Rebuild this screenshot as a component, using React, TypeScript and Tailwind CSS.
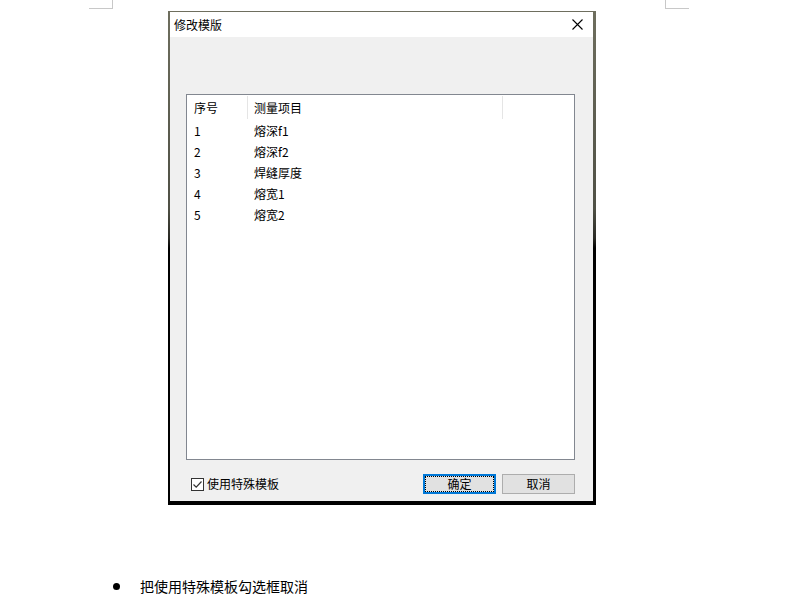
const rows = [
  { no: "1", name: "熔深f1" },
  { no: "2", name: "熔深f2" },
  { no: "3", name: "焊缝厚度" },
  { no: "4", name: "熔宽1" },
  { no: "5", name: "熔宽2" },
];

function CloseIcon() {
  return (
    <svg width="11" height="11" viewBox="0 0 11 11" className="block">
      <path d="M0.5 0.5 L10.5 10.5 M10.5 0.5 L0.5 10.5" stroke="#000" strokeWidth="1.1" fill="none" />
    </svg>
  );
}

function CheckBox() {
  return (
    <span className="flex h-[13px] w-[13px] items-center justify-center border border-[#333] bg-white">
      <svg width="11" height="11" viewBox="0 0 11 11" className="block">
        <path d="M1.5 5.5 L4.2 8.2 L9.5 2.5" stroke="#333" strokeWidth="1.2" fill="none" />
      </svg>
    </span>
  );
}

export default function App() {
  return (
    <div className="h-[604px] w-[786px] overflow-hidden bg-white font-['Noto_Sans_CJK_SC','Noto_Sans',sans-serif] text-black">
      {/* 页面角标 */}
      <div className="flex h-[11px]">
        <div className="ml-[89px] h-[9px] w-[24px] border-b border-r border-[#c8c8c8]" />
        <div className="ml-[552px] h-[9px] w-[24px] border-b border-l border-[#c8c8c8]" />
      </div>

      {/* 对话框 */}
      <div className="ml-[168px] w-[428px] bg-[linear-gradient(to_bottom,#6e6e5e,#4f5045_40%,#2a2a24_46%,#000_48%,#000)] pb-[4px] pl-[2px] pr-[3px] pt-[1px]">
        <div className="flex h-[25px] items-center justify-between bg-white pl-[4px] pr-[10px]">
          <span className="text-[12px] leading-[14px]">修改模版</span>
          <CloseIcon />
        </div>
        <div className="flex h-[464px] flex-col bg-[#f0f0f0] pl-[16px] pr-[18px] pt-[57px]">
          <div className="h-[366px] border border-[#828790] bg-white">
            <div className="flex h-[25px] text-[12px] leading-[14px]">
              <div className="flex w-[60px] items-center pl-[7px]">序号</div>
              <div className="my-[1px] flex w-[255px] items-center border-l border-[#e5e5e5] pl-[6px]">测量项目</div>
              <div className="my-[1px] flex-1 border-l border-[#e5e5e5]" />
            </div>
            {rows.map((r) => (
              <div key={r.no} className="flex h-[21px] items-center text-[12px] leading-[14px]">
                <div className="w-[60px] pl-[7px]">{r.no}</div>
                <div className="pl-[7px]">{r.name}</div>
              </div>
            ))}
          </div>
          <div className="mt-[14px] flex h-[20px] items-center">
            <div className="ml-[5px] flex items-center">
              <CheckBox />
              <span className="ml-[3px] text-[12px] leading-[14px]">使用特殊模板</span>
            </div>
            <button className="ml-auto flex h-[20px] w-[73px] items-center justify-center border-2 border-[#0078d7] bg-[#e1e1e1] p-0">
              <span className="flex h-full w-full items-center justify-center border border-dotted border-black text-[12px] leading-[14px]">
                确定
              </span>
            </button>
            <button className="ml-[6px] flex h-[20px] w-[73px] items-center justify-center border border-[#adadad] bg-[#e1e1e1] text-[12px] leading-[14px]">
              取消
            </button>
          </div>
        </div>
      </div>

      {/* 说明 */}
      <div className="ml-[113px] mt-[72px] flex items-center">
        <span className="h-[7px] w-[7px] rounded-full bg-black" />
        <span className="ml-[20px] text-[14px] leading-[18px]">把使用特殊模板勾选框取消</span>
      </div>
    </div>
  );
}
